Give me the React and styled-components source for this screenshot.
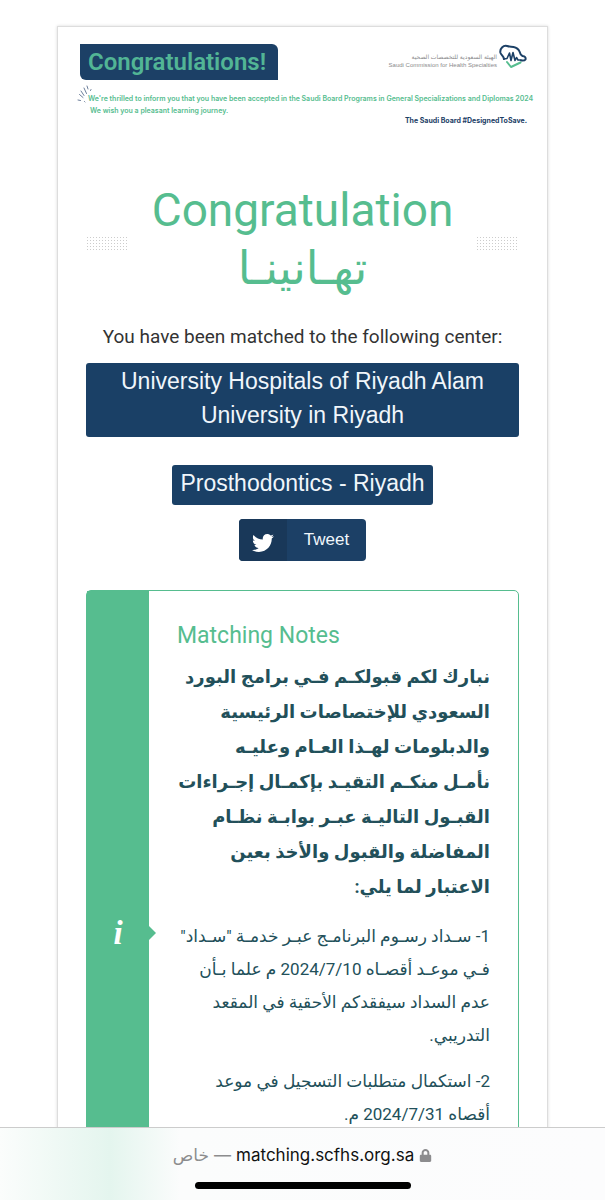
import React from 'react'
import styled, { createGlobalStyle } from 'styled-components'
import { FaLock, FaTwitter } from 'react-icons/fa'

const App = () => (
  <Root>
    <GlobalStyle />
    <Page>
      <Card>
        <Banner>
          <BannerTop>
            <BannerTitle>Congratulations!</BannerTitle>
            <Brand>
              <BrandName>
                <BrandText lang="ar" dir="rtl">
                  الهيئة السعودية للتخصصات الصحية
                </BrandText>
                <BrandText>Saudi Commission for Health Specialties</BrandText>
              </BrandName>
              <BrandLogo />
            </Brand>
          </BannerTop>
          <BannerBody>
            <Sparks />
            <BannerText>
              We're thrilled to inform you that you have been accepted in the Saudi Board Programs in General
              Specializations and Diplomas 2024
            </BannerText>
            <BannerText $indent>We wish you a pleasant learning journey.</BannerText>
          </BannerBody>
          <Tagline>The Saudi Board #DesignedToSave.</Tagline>
        </Banner>

        <Content>
          <Heading>
            <Dots />
            <HeadingText>
              Congratulation
              <HeadingArabic lang="ar" dir="rtl">
                تهـانينـا
              </HeadingArabic>
            </HeadingText>
            <Dots />
          </Heading>
          <Lead>You have been matched to the following center:</Lead>
          <Center>University Hospitals of Riyadh Alam University in Riyadh</Center>
          <Program>Prosthodontics - Riyadh</Program>
          <TweetButton type="button">
            <TweetIcon>
              <FaTwitter />
            </TweetIcon>
            <TweetLabel>Tweet</TweetLabel>
          </TweetButton>

          <Notes>
            <NotesSide>
              <InfoIcon>i</InfoIcon>
            </NotesSide>
            <NotesBody>
              <NotesTitle>Matching Notes</NotesTitle>
              <Intro lang="ar" dir="rtl">
                نبارك لكم قبولكـم فـي برامج البورد
                <br />
                السعودي للإختصاصات الرئيسية
                <br />
                والدبلومات لهـذا العـام وعليـه
                <br />
                نأمـل منكـم التقيـد بإكمـال إجـراءات
                <br />
                القبـول التاليـة عبـر بوابـة نظـام
                <br />
                المفاضلة والقبول والأخذ بعين
                <br />
                الاعتبار لما يلي:
              </Intro>
              <Note lang="ar" dir="rtl">
                1- سـداد رسـوم البرنامـج عبـر خدمـة "سـداد"
                <br />
                فـي موعـد أقصـاه <bdi>2024/7/10</bdi> م علما بـأن
                <br />
                عدم السداد سيفقدكم الأحقية في المقعد
                <br />
                التدريبي.
              </Note>
              <Note lang="ar" dir="rtl">
                2- استكمال متطلبات التسجيل في موعد
                <br />
                أقصاه <bdi>2024/7/31</bdi> م.
              </Note>
            </NotesBody>
          </Notes>
        </Content>
      </Card>
    </Page>

    <BrowserBar>
      <Address dir="rtl">
        <FaLock />
        <Host dir="ltr">matching.scfhs.org.sa</Host>
        <span>—</span>
        <span lang="ar">خاص</span>
      </Address>
      <HomeIndicator />
    </BrowserBar>
  </Root>
)

export default App

const BrandLogo = () => (
  <LogoSvg viewBox="0 0 28 25" fill="none" strokeLinecap="round" strokeLinejoin="round" aria-hidden="true">
    <path
      d="M5 15C4.5 12 2.5 11.5 1.5 9 1 7 1.5 5 3 3.5 4.5 2 6 1.5 8 2 10 2.5 12 3 14.5 3 17 3.5 19.5 5 20.5 7.5 21 9.5 21.5 11 23.5 12 26 12.5 27 13.5 26.5 15.5 25.5 17 23.5 16.5 22 16.5"
      stroke="#1c4066"
      strokeWidth="2"
    />
    <path d="M5 15L8 14.5 10.5 9 12 16.5 14 8.5 16 16.5 17.5 13.5 19 16H22" stroke="#1c4066" strokeWidth="1.6" />
    <path d="M8 18L12 23 21.5 18.5" stroke="#56bd8f" strokeWidth="2" />
  </LogoSvg>
)

const Sparks = () => (
  <SparksSvg viewBox="0 0 16 18" stroke="#6d7f9b" strokeWidth="1" strokeLinecap="round" aria-hidden="true">
    <path d="M1 15L3.5 15.5M2.5 9.5L6 12.5M4 6L7 10.5M7 3L9.5 8.5M10 1L11 4M14 4.5L13.5 5.5M7.5 16.5L8 17" />
  </SparksSvg>
)

// #region styled-components
const GlobalStyle = createGlobalStyle`
  * {
    box-sizing: border-box;
  }

  body {
    margin: 0;
    background-color: #fff;
    font-family: Roboto, 'DejaVu Sans', sans-serif;
  }
`

const Root = styled.div`
  display: flex;
  flex-direction: column;
  height: 100vh;
`

const Page = styled.main`
  flex: 1;
  min-height: 0;
  overflow: hidden;
  padding: 26px 57px 0;
`

const Card = styled.article`
  border: 1px solid #ddd;
  box-shadow: 0 0 3px rgba(0, 0, 0, 0.15);
`

const Banner = styled.header`
  display: flex;
  flex-direction: column;
  padding: 17px 20px 0 22px;
`

const BannerTop = styled.div`
  display: flex;
  justify-content: space-between;
`

const BannerTitle = styled.div`
  background-color: #1c4066;
  border-radius: 0 6px 0 6px;
  color: #52b595;
  font-size: 24px;
  font-weight: 600;
  line-height: 36px;
  padding: 0 12px 0 8px;
`

const Brand = styled.div`
  display: flex;
  align-items: flex-start;
  gap: 2px;
`

const BrandName = styled.div`
  color: #8a8a8c;
  display: flex;
  flex-direction: column;
  padding-top: 9px;
  text-align: right;
`

const BrandText = styled.span`
  font-family: 'Liberation Sans', 'DejaVu Sans', sans-serif;
  font-size: 6px;
  line-height: 8px;
`

const LogoSvg = styled.svg`
  height: 25px;
  width: 28px;
`

const BannerBody = styled.div`
  color: #56bd8f;
  padding: 13px 0 0 8px;
  position: relative;
`

const SparksSvg = styled.svg`
  height: 18px;
  left: -3px;
  position: absolute;
  top: 5px;
  width: 16px;
`

const BannerText = styled.p`
  font-family: Inter, sans-serif;
  font-size: 7px;
  font-weight: 600;
  line-height: 12px;
  margin: 0;
  padding-left: ${p => (p.$indent ? 2 : 0)}px;
  white-space: nowrap;
`

const Tagline = styled.div`
  align-self: flex-end;
  color: #1c4066;
  font-family: Inter, sans-serif;
  font-size: 7px;
  font-weight: 700;
  line-height: 8px;
`

const Content = styled.div`
  display: flex;
  flex-direction: column;
  align-items: center;
  padding: 56px 28px 28px;
`

const Heading = styled.div`
  align-self: stretch;
  display: flex;
  align-items: center;
  justify-content: space-between;
`

const HeadingText = styled.h1`
  color: #56bd8f;
  font-size: 46px;
  font-weight: 400;
  line-height: 58px;
  margin: 0;
  text-align: center;
`

const HeadingArabic = styled.span`
  display: block;
`

const Dots = styled.span`
  background-image: radial-gradient(circle, #ccc 1px, transparent 1px);
  background-size: 3px 3px;
  height: 14px;
  margin-top: 8px;
  width: 43px;
`

const Lead = styled.p`
  color: #333;
  font-size: 19px;
  line-height: 28px;
  margin: 26px 0 12px;
`

const Label = styled.div`
  background-color: #1a4066;
  border-radius: 3px;
  color: #f0f6fb;
  font-family: 'Liberation Sans', sans-serif;
  font-size: 23px;
  line-height: 34px;
  padding: 1px 8px 5px;
  text-align: center;
`

const Center = styled(Label)`
  align-self: stretch;
  padding: 1px 24px 5px;
`

const Program = styled(Label)`
  margin: 28px 0 14px;
`

const TweetButton = styled.button`
  background-color: #1c4066;
  border: none;
  border-radius: 4px;
  color: #f0f6fb;
  display: flex;
  font-family: 'Liberation Sans', sans-serif;
  font-size: 17px;
  height: 42px;
  overflow: hidden;
  padding: 0;
`

const TweetIcon = styled.span`
  align-items: center;
  align-self: stretch;
  background-color: #193859;
  color: #fff;
  display: flex;
  font-size: 22px;
  justify-content: center;
  padding-top: 6px;
  width: 48px;
`

const TweetLabel = styled.span`
  align-self: center;
  padding: 0 17px;
`

const Notes = styled.section`
  align-self: stretch;
  border: 1px solid #56bd8f;
  border-radius: 5px;
  display: flex;
  margin-top: 29px;
`

const NotesSide = styled.div`
  align-items: center;
  background-color: #56bd8f;
  display: flex;
  flex: none;
  justify-content: center;
  position: relative;
  width: 62px;

  &::after {
    border: 7px solid transparent;
    border-left-color: #56bd8f;
    border-right-width: 0;
    content: '';
    left: 100%;
    position: absolute;
    top: calc(50% - 7px);
  }
`

const InfoIcon = styled.span`
  color: #fff;
  font-family: 'Liberation Serif', serif;
  font-size: 33px;
  font-style: italic;
  font-weight: 700;
  line-height: 34px;
`

const NotesBody = styled.div`
  color: #22505a;
  flex: 1;
  min-width: 0;
  padding: 28px 28px 130px;
`

const NotesTitle = styled.h2`
  color: #56bd8f;
  font-size: 23px;
  font-weight: 400;
  line-height: 34px;
  margin: 0;
`

const Intro = styled.p`
  font-size: 18px;
  font-weight: 700;
  line-height: 35px;
  margin: 6px 0 16px;
  white-space: nowrap;
`

const Note = styled.p`
  font-size: 17px;
  line-height: 33px;
  margin: 0 0 13px;
  white-space: nowrap;
`

const BrowserBar = styled.footer`
  background: linear-gradient(90deg, #fbfdfc 0, #e4f5ee 110px, #fbfcfc 180px, #fcfcfd);
  border-top: 1px solid #ccc;
  display: flex;
  flex: none;
  flex-direction: column;
  align-items: center;
  padding: 14px 0 11px;
`

const Address = styled.div`
  align-items: center;
  color: #8c8c8e;
  display: flex;
  font-family: Inter, 'DejaVu Sans', sans-serif;
  font-size: 17px;
  gap: 5px;
  line-height: 26px;

  svg {
    font-size: 13px;
  }
`

const Host = styled.span`
  color: #111;
`

const HomeIndicator = styled.div`
  background-color: #000;
  border-radius: 4px;
  height: 7px;
  margin-top: 14px;
  width: 216px;
`
// #endregion
